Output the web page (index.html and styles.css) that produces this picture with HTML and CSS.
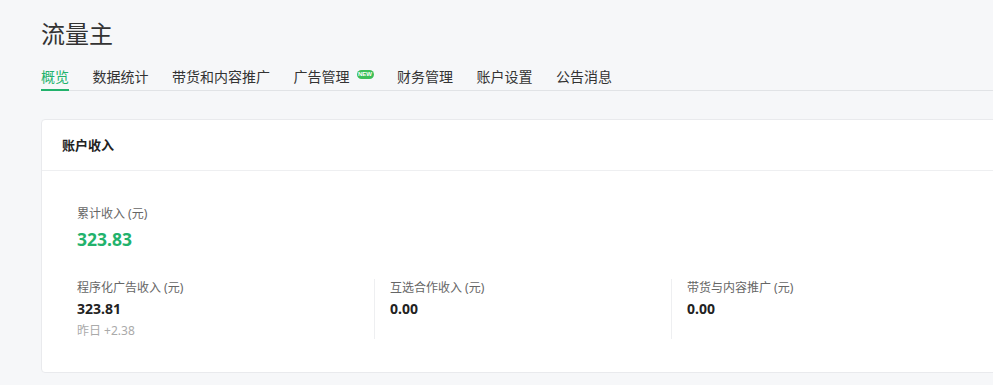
FILE: index.html
```html
<!DOCTYPE html>
<html lang="zh-CN">
  <head>
    <meta charset="UTF-8" />
    <meta name="viewport" content="width=device-width, initial-scale=1.0" />
    <title>流量主</title>
    <link rel="stylesheet" href="styles.css">
  </head>
  <body>
    <div id="page">
      <h1 class="page-title">流量主</h1>
      <nav class="tabs">
        <a href="javascript:;" class="tab active">概览</a>
        <a href="javascript:;" class="tab">数据统计</a>
        <a href="javascript:;" class="tab">带货和内容推广</a>
        <a href="javascript:;" class="tab">广告管理<span class="badge-new">NEW</span></a>
        <a href="javascript:;" class="tab">财务管理</a>
        <a href="javascript:;" class="tab">账户设置</a>
        <a href="javascript:;" class="tab">公告消息</a>
      </nav>

      <div class="card">
        <div class="card-head">账户收入</div>
        <div class="card-body">
          <div class="total">
            <div class="label">累计收入 (元)</div>
            <div class="total-value">323.83</div>
          </div>
          <ul class="income-list">
            <li class="income-item">
              <div class="label">程序化广告收入 (元)</div>
              <div class="value">323.81</div>
              <div class="sub">昨日 +2.38</div>
            </li>
            <li class="income-item">
              <div class="label">互选合作收入 (元)</div>
              <div class="value">0.00</div>
            </li>
            <li class="income-item">
              <div class="label">带货与内容推广 (元)</div>
              <div class="value">0.00</div>
            </li>
          </ul>
        </div>
      </div>
    </div>
  </body>
</html>
```

FILE: styles.css
```css
html,
body,
h1,
ul,
li,
div {
  margin: 0;
  padding: 0;
}

ul,
li {
  list-style: none;
}

a {
  text-decoration: none;
}

html,
body {
  overflow: hidden;
}

body {
  background-color: #f6f7f9;
  color: #333;
  font-family: "Noto Sans", "Noto Sans CJK SC", sans-serif;
  font-size: 14px;
}

#page {
  padding: 18px 0 0 41px;
}

.page-title {
  font-size: 24px;
  font-weight: normal;
  line-height: 32px;
  color: #333;
}

.tabs {
  display: flex;
  gap: 23.5px;
  margin-top: 16px;
  border-bottom: 1px solid #e1e3e6;
}

.tab {
  display: flex;
  align-items: center;
  padding-bottom: 1px;
  margin-bottom: -1px;
  line-height: 22px;
  color: #333;
  border-bottom: 2px solid transparent;
}

.tab.active {
  color: #22b26c;
  border-bottom-color: #22b26c;
}

.badge-new {
  display: inline-block;
  margin: -6px 0 0 7px;
  width: 17px;
  height: 9px;
  border-radius: 5px;
  background-color: #3cbf5a;
  color: #fff;
  font-family: "Liberation Sans", sans-serif;
  font-size: 6px;
  font-weight: bold;
  line-height: 9px;
  text-align: center;
}

.card {
  width: 1200px;
  margin-top: 28px;
  background-color: #fff;
  border: 1px solid #e9eaed;
  border-radius: 4px;
}

.card-head {
  height: 50px;
  line-height: 50px;
  padding: 0 20px;
  font-size: 13px;
  font-weight: bold;
  color: #222;
  border-bottom: 1px solid #eeeff1;
}

.card-body {
  padding: 34px 0 33px 35px;
}

.label {
  font-size: 12px;
  line-height: 18px;
  color: #666;
}

.total-value {
  margin-top: 4px;
  font-size: 17.5px;
  font-weight: bold;
  line-height: 24px;
  color: #22b26c;
}

.income-list {
  display: flex;
  margin-top: 28px;
}

.income-item {
  width: 297px;
  height: 60px;
  box-sizing: border-box;
}

.income-item + .income-item {
  border-left: 1px solid #eeeff1;
  padding-left: 15px;
}

.value {
  margin-top: 2px;
  font-size: 14px;
  font-weight: bold;
  line-height: 20px;
  color: #222;
}

.sub {
  margin-top: 3px;
  font-size: 12px;
  line-height: 18px;
  color: #aaa;
}
```
